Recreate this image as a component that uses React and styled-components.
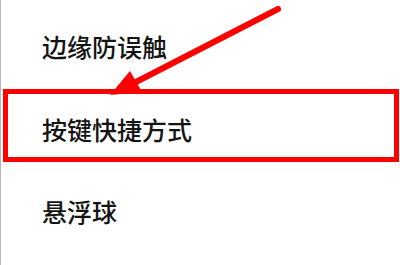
import React from "react";
import styled, { createGlobalStyle } from "styled-components";

const GlobalStyle = createGlobalStyle`
	html, body {
		margin: 0;
		padding: 0;
		background: #fff;
	}
	body {
		font-family: "Noto Sans CJK SC", "Noto Sans", sans-serif;
	}
`;

const items = [
	{ label: "边缘防误触" },
	{ label: "按键快捷方式", marked: true },
	{ label: "悬浮球" },
];

const App = () => {
	return (
		<>
			<GlobalStyle />
			<Screen>
				<List>
					{items.map((item, i) =>
						item.marked ? (
							<Marked key={item.label}>
								<Label>{item.label}</Label>
							</Marked>
						) : (
							<Row key={item.label} $first={i === 0}>
								<Label>{item.label}</Label>
							</Row>
						)
					)}
				</List>
				<Arrow viewBox="0 0 400 265" aria-hidden="true">
					<line
						x1="278"
						y1="9"
						x2="134"
						y2="83"
						stroke="#ff0000"
						strokeWidth="6"
						strokeLinecap="round"
					/>
					<polygon points="110,95 130,71 142,92" fill="#ff0000" />
				</Arrow>
			</Screen>
		</>
	);
};

const Screen = styled.div`
	position: relative;
	width: 400px;
	height: 265px;
	overflow: hidden;
	border-left: 1px solid #b8b8b8;
	box-sizing: border-box;
	background: #fff;
`;

const List = styled.ul`
	list-style: none;
	margin: 0;
	padding: 0;
	display: flex;
	flex-direction: column;
`;

const Row = styled.li`
	display: flex;
	align-items: center;
	box-sizing: border-box;
	height: ${({ $first }) => ($first ? 89 : 103)}px;
	padding: ${({ $first }) => ($first ? "4px 0 0 41px" : "0 0 5px 41px")};
`;

const Marked = styled.li`
	display: flex;
	align-items: center;
	box-sizing: border-box;
	height: 73px;
	margin: 0 1px 0 2px;
	padding: 7px 0 0 34px;
	border: 5px solid #ff0000;
`;

const Label = styled.span`
	font-size: 25px;
	line-height: 1;
	font-weight: 500;
	color: #141414;
`;

const Arrow = styled.svg`
	position: absolute;
	left: -1px;
	top: 0;
	width: 400px;
	height: 265px;
	pointer-events: none;
`;

export default App;
